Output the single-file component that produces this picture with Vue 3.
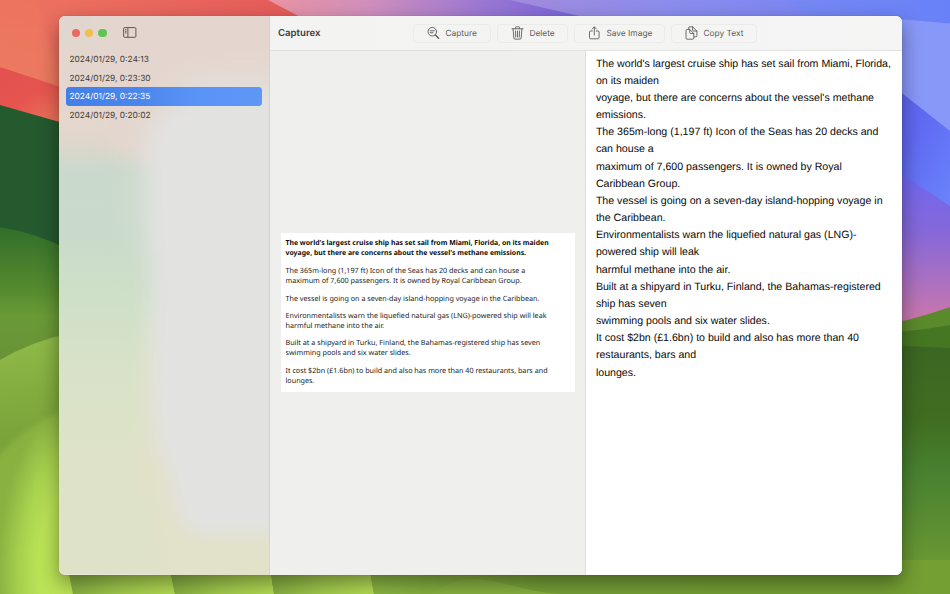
<script setup>
import { ref } from 'vue'

const captures = [
  '2024/01/29, 0:24:13',
  '2024/01/29, 0:23:30',
  '2024/01/29, 0:22:35',
  '2024/01/29, 0:20:02',
]
const selected = ref(2)

const imageParagraphs = [
  ['The 365m-long (1,197 ft) Icon of the Seas has 20 decks and can house a', 'maximum of 7,600 passengers. It is owned by Royal Caribbean Group.'],
  ['The vessel is going on a seven-day island-hopping voyage in the Caribbean.'],
  ['Environmentalists warn the liquefied natural gas (LNG)-powered ship will leak', 'harmful methane into the air.'],
  ['Built at a shipyard in Turku, Finland, the Bahamas-registered ship has seven', 'swimming pools and six water slides.'],
  ['It cost $2bn (£1.6bn) to build and also has more than 40 restaurants, bars and', 'lounges.'],
]

const recognised = [
  "The world's largest cruise ship has set sail from Miami, Florida,",
  'on its maiden',
  "voyage, but there are concerns about the vessel's methane",
  'emissions.',
  'The 365m-long (1,197 ft) Icon of the Seas has 20 decks and',
  'can house a',
  'maximum of 7,600 passengers. It is owned by Royal',
  'Caribbean Group.',
  'The vessel is going on a seven-day island-hopping voyage in',
  'the Caribbean.',
  'Environmentalists warn the liquefied natural gas (LNG)-',
  'powered ship will leak',
  'harmful methane into the air.',
  'Built at a shipyard in Turku, Finland, the Bahamas-registered',
  'ship has seven',
  'swimming pools and six water slides.',
  'It cost $2bn (£1.6bn) to build and also has more than 40',
  'restaurants, bars and',
  'lounges.',
]
</script>

<template>
  <div class="desktop">
    <svg class="wallpaper" viewBox="0 0 950 594" aria-hidden="true">
      <defs>
        <linearGradient id="coral" x1="0" y1="0" x2="1" y2="0">
          <stop offset="0" stop-color="#ee735f" /><stop offset=".2" stop-color="#ec6f5f" /><stop offset="1" stop-color="#e4595a" />
        </linearGradient>
        <linearGradient id="orange" x1="0" y1="0" x2="0" y2="1">
          <stop offset="0" stop-color="#ee735f" /><stop offset="1" stop-color="#ea8560" />
        </linearGradient>
        <linearGradient id="red" x1="0" y1="0" x2=".6" y2="1">
          <stop offset="0" stop-color="#e25050" /><stop offset=".5" stop-color="#e6554f" /><stop offset="1" stop-color="#ee7c5c" />
        </linearGradient>
        <linearGradient id="pink" gradientUnits="userSpaceOnUse" x1="270" y1="0" x2="600" y2="0">
          <stop offset="0" stop-color="#ea93a2" /><stop offset=".3" stop-color="#d08fbd" /><stop offset=".65" stop-color="#9a77d3" /><stop offset="1" stop-color="#6f61e0" />
        </linearGradient>
        <linearGradient id="peri" gradientUnits="userSpaceOnUse" x1="515" y1="0" x2="810" y2="0">
          <stop offset="0" stop-color="#a18bdc" /><stop offset=".5" stop-color="#8c8dee" /><stop offset="1" stop-color="#7b86f2" />
        </linearGradient>
        <linearGradient id="blue" gradientUnits="userSpaceOnUse" x1="790" y1="0" x2="950" y2="0">
          <stop offset="0" stop-color="#7788f3" /><stop offset="1" stop-color="#6881f8" />
        </linearGradient>
        <linearGradient id="deep" x1="0" y1="0" x2="1" y2="1">
          <stop offset="0" stop-color="#5a62ef" /><stop offset=".5" stop-color="#6069f2" /><stop offset="1" stop-color="#6a84fb" />
        </linearGradient>
        <linearGradient id="dusk" gradientUnits="userSpaceOnUse" x1="0" y1="175" x2="0" y2="322">
          <stop offset="0" stop-color="#6f67ef" /><stop offset=".4" stop-color="#8768d8" /><stop offset=".8" stop-color="#b472ba" /><stop offset="1" stop-color="#cb77a9" />
        </linearGradient>
        <linearGradient id="forest" gradientUnits="userSpaceOnUse" x1="0" y1="345" x2="0" y2="594">
          <stop offset="0" stop-color="#3b6623" /><stop offset=".3" stop-color="#406d21" /><stop offset=".5" stop-color="#478030" /><stop offset="1" stop-color="#759f35" />
        </linearGradient>
        <linearGradient id="hill" gradientUnits="userSpaceOnUse" x1="0" y1="225" x2="0" y2="355">
          <stop offset="0" stop-color="#316d2b" /><stop offset=".5" stop-color="#558b2e" /><stop offset=".7" stop-color="#6a9a36" /><stop offset="1" stop-color="#689437" />
        </linearGradient>
        <linearGradient id="meadow" gradientUnits="userSpaceOnUse" x1="0" y1="340" x2="20" y2="480">
          <stop offset="0" stop-color="#8fba48" /><stop offset=".4" stop-color="#83ac3f" /><stop offset="1" stop-color="#729a37" />
        </linearGradient>
        <radialGradient id="glow" gradientUnits="userSpaceOnUse" cx="80" cy="570" r="82" gradientTransform="matrix(1 0 0 2.050 0 -598)">
          <stop offset="0" stop-color="#bde557" /><stop offset=".5" stop-color="#bbe357" /><stop offset=".72" stop-color="#a9d34f" /><stop offset="1" stop-color="#88b141" />
        </radialGradient>
        <linearGradient id="floor" x1="0" y1="0" x2="1" y2="0">
          <stop offset="0" stop-color="#85ad40" /><stop offset=".5" stop-color="#a2cb4c" /><stop offset="1" stop-color="#b6de54" />
        </linearGradient>
        <linearGradient id="slope" x1="0" y1="0" x2="1" y2="0">
          <stop offset="0" stop-color="#8cb743" /><stop offset=".3" stop-color="#76a036" /><stop offset="1" stop-color="#749f33" />
        </linearGradient>
        <filter id="haze"><feGaussianBlur stdDeviation="2.500" /></filter>
      </defs>
      <rect width="950" height="594" fill="#749f33" />
      <path d="M0 0H270L320 26V130H0Z" fill="url(#coral)" />
      <path d="M-20 -20H30L59 75V95L-20 60Z" fill="url(#orange)" opacity=".5" filter="url(#haze)" />
      <path d="M0 67L70 90V140H0Z" fill="url(#red)" />
      <path d="M268 0H620V30H325Z" fill="url(#pink)" />
      <path d="M510 0H950V30H640Z" fill="url(#peri)" />
      <path d="M788 0H950V30H830Z" fill="url(#blue)" />
      <path d="M870 18Q910 19 950 23.500V140H870Z" fill="#8898f8" />
      <path d="M870 68L950 131V210H870Z" fill="url(#deep)" />
      <path d="M870 153L950 206V330H870Z" fill="url(#dusk)" />
      <path d="M870 328Q914 320 950 307V594H870Z" fill="#5b8a2c" />
      <path d="M870 334Q920 331 950 325V594H870Z" fill="#457722" />
      <path d="M870 343Q910 347 950 348V594H870Z" fill="url(#forest)" />
      <path d="M0 105L70 125V260H0Z" fill="#25592e" />
      <path d="M0 227Q36 233 70 250V400H0Z" fill="url(#hill)" />
      <path d="M0 360Q30 342 70 333V594H0Z" fill="url(#meadow)" />
      <path d="M-30 490Q14 426 76 405V630H-30Z" fill="url(#glow)" filter="url(#haze)" />
      <path d="M66 560L73 594H175L168 560Z" fill="url(#floor)" />
      <path d="M168 560L175 594H274L269 560Z" fill="url(#floor)" />
      <path d="M269 560L274 594H374L368 560Z" fill="url(#floor)" />
      <path d="M368 560L374 594H950V560Z" fill="url(#slope)" />
      <path d="M430 594C445 584 460 578 478 579C505 581 520 591 560 594Z" fill="#87b040" />
    </svg>

    <main class="window">
      <aside class="sidebar">
        <svg class="vibrancy" viewBox="0 0 210 558" preserveAspectRatio="none" aria-hidden="true">
          <defs>
            <linearGradient id="tint" x1="0" y1="0" x2="0" y2="1">
              <stop offset="0" stop-color="#e1d6cf" /><stop offset=".19" stop-color="#e4d7ce" />
              <stop offset=".225" stop-color="#dfd6cc" /><stop offset=".28" stop-color="#cad9cb" /><stop offset=".39" stop-color="#c9dacb" />
              <stop offset=".5" stop-color="#cfe0c8" /><stop offset=".65" stop-color="#d9e2c9" />
              <stop offset=".8" stop-color="#dee2c8" /><stop offset="1" stop-color="#dfe2c9" />
            </linearGradient>
            <filter id="soft" x="-50%" y="-50%" width="200%" height="200%"><feGaussianBlur stdDeviation="9" /></filter>
            <filter id="softer" x="-50%" y="-50%" width="200%" height="200%"><feGaussianBlur stdDeviation="18" /></filter>
          </defs>
          <rect width="210" height="558" fill="url(#tint)" />
          <g filter="url(#soft)">
            <path d="M40 -20H230V110L105 150L50 128Z" fill="#e4d6ce" />
            <path d="M90 300L84 440L105 590H125L230 570V500H130L100 300Z" fill="#e2e1c9" />
          </g>
          <path d="M130 66H240V240H90V120Z" fill="#e1e2df" filter="url(#softer)" />
          <path d="M108 100L150 88H240V518H140Q120 515 115 480Q112 455 98 430Q92 400 93 330V135Q95 112 108 100Z" fill="#e2e2e1" filter="url(#soft)" />
        </svg>
        <header class="chrome">
          <span class="light close"></span>
          <span class="light minimise"></span>
          <span class="light zoom"></span>
          <svg class="toggle" viewBox="0 0 14 11">
            <rect x=".6" y=".6" width="12.300" height="9.700" rx="1" /><path d="M4.900.6V10.300M2 2.700H3.500M2 4.300H3.500M2 5.900H3.500" />
          </svg>
        </header>
        <ul class="captures">
          <li v-for="(name, i) in captures" :key="name" :class="{ selected: i === selected }" @click="selected = i">{{ name }}</li>
        </ul>
      </aside>

      <section class="content">
        <header class="toolbar">
          <h1>Capturex</h1>
          <nav class="actions">
            <button class="capture">
              <svg viewBox="0 0 13 14"><circle cx="5.300" cy="5.700" r="4.300" /><path d="M8.400 9L11.600 12.200" stroke-width="1.400" /><path d="M3.200 4.800H7.400M3.200 6.700H6" /></svg>
              Capture
            </button>
            <button class="delete">
              <svg viewBox="0 0 13 14"><path d="M1 2.800H12M4.500 2.600V1.500Q4.500.8 5.200.8H7.800Q8.500.8 8.500 1.500V2.600M2.100 3L2.800 12Q2.900 13.100 4 13.100H9Q10.100 13.100 10.200 12L10.900 3M4.500 5L4.700 11M6.500 5V11M8.500 5L8.300 11" /></svg>
              Delete
            </button>
            <button class="save">
              <svg viewBox="0 0 13 14"><path d="M4.300 5H2.600Q1.500 5 1.500 6.100V11.700Q1.500 12.800 2.600 12.800H10Q11.100 12.800 11.100 11.700V6.100Q11.100 5 10 5H8.300M6.300 9V1M4.200 3L6.300.9L8.400 3" /></svg>
              Save Image
            </button>
            <button class="copy">
              <svg viewBox="0 0 13 14"><path d="M3.700 3.200V1.900Q3.700.8 4.800.8H7.600L11.900 5V9.700Q11.900 10.800 10.800 10.800H9.100M7.600.9V4Q7.600 5 8.600 5H11.800" /><path fill="#f4f4f3" d="M1 4.400Q1 3.400 2 3.400H4.600L8.800 7.500V12.200Q8.800 13.200 7.800 13.200H2Q1 13.200 1 12.200Z" /><path d="M4.700 3.500V6.500Q4.700 7.500 5.700 7.500H8.700" /></svg>
              Copy Text
            </button>
          </nav>
        </header>
        <div class="panes">
          <div class="preview">
            <article class="shot">
              <p class="lead">The world's largest cruise ship has set sail from Miami, Florida, on its maiden<br />voyage, but there are concerns about the vessel's methane emissions.</p>
              <p v-for="(lines, i) in imageParagraphs" :key="i"><template v-for="(line, j) in lines" :key="j"><br v-if="j" />{{ line }}</template></p>
            </article>
          </div>
          <div class="text">
            <div v-for="(line, i) in recognised" :key="i">{{ line }}</div>
          </div>
        </div>
      </section>
    </main>
  </div>
</template>

<style>
body { margin: 0; overflow: hidden; }
</style>

<style scoped>
.desktop {
  position: relative;
  width: 950px;
  height: 594px;
  box-sizing: border-box;
  padding: 16px 48.5px 19.5px 59px;
  overflow: hidden;
  font-family: Inter, "Liberation Sans", sans-serif;
  text-rendering: geometricPrecision;
}
.wallpaper {
  position: absolute;
  inset: 0;
  width: 950px;
  height: 594px;
}
.window {
  position: relative;
  display: flex;
  height: 558.5px;
  border-radius: 6px;
  overflow: hidden;
  background: #efefee;
  box-shadow: 0 0 1px rgba(0, 0, 0, .3), 0 8px 20px rgba(0, 0, 0, .4);
}
.sidebar {
  position: relative;
  flex: 0 0 210.5px;
  box-sizing: border-box;
  border-right: 1px solid #d2d2d0;
  overflow: hidden;
}
.vibrancy {
  position: absolute;
  inset: 0;
  width: 100%;
  height: 100%;
}
.chrome {
  position: relative;
  display: flex;
  align-items: center;
  gap: 4.8px;
  height: 34px;
  padding-left: 12.7px;
}
.light {
  width: 8.5px;
  height: 8.5px;
  border-radius: 50%;
}
.close { background: #ec695f; }
.minimise { background: #f2be4f; }
.zoom { background: #5fc454; }
.toggle {
  width: 14px;
  height: 11px;
  margin: -1px 0 0 11.5px;
  fill: none;
  stroke: #5f5855;
  stroke-width: 1;
}
.captures {
  position: relative;
  margin: 0;
  padding: .3px 6.5px 0;
  list-style: none;
}
.captures li {
  height: 18.5px;
  padding-left: 3.9px;
  border-radius: 3.5px;
  color: #403b39;
  font-size: 8.4px;
  line-height: 20.6px;
}
.captures .selected {
  background: linear-gradient(90deg, #437fe8, #4b86ec 38%, #5a93f6 65%, #5f97f8);
  color: #fff;
}
.content {
  flex: 1;
  min-width: 0;
  display: flex;
  flex-direction: column;
}
.toolbar {
  display: flex;
  align-items: center;
  box-sizing: border-box;
  height: 35px;
  padding-left: 8.5px;
  border-bottom: 1px solid #e0e0df;
  background: linear-gradient(90deg, #f3f3f1, #f4f4f3 50%, #f5f5f5);
}
h1 {
  width: 135.2px;
  margin: 1px 0 0;
  color: #3d3d3c;
  font-size: 9.65px;
  font-weight: 600;
}
.actions {
  display: flex;
  gap: 6px;
}
button {
  display: flex;
  align-items: center;
  box-sizing: border-box;
  height: 19px;
  padding: 1px 0 0 13px;
  border: 1px solid #ebebea;
  border-radius: 4px;
  background: transparent;
  color: #5c5c5b;
  font: 8.4px Inter, "Liberation Sans", sans-serif;
  text-rendering: geometricPrecision;
  white-space: nowrap;
}
button svg {
  width: 13px;
  height: 14px;
  margin: -1px 5px 0 .2px;
  fill: none;
  stroke: #5c5c5b;
  stroke-width: .9;
  stroke-linecap: round;
  stroke-linejoin: round;
}
.capture { width: 78px; }
.delete { width: 71px; }
.save { width: 91px; }
.copy { width: 86px; }
.panes {
  flex: 1;
  display: flex;
}
.preview {
  flex: 0 0 316.5px;
  display: flex;
  align-items: center;
  box-sizing: border-box;
  padding: 0 10.500px 0 11px;
  border-right: 1px solid #dedede;
  background: #efefee;
}
.shot {
  flex: 1;
  box-sizing: border-box;
  height: 159px;
  padding: 5.900px 5px;
  background: #fff;
  color: #222;
  font: 7.2px/10px "Noto Sans", "Open Sans", sans-serif;
  white-space: nowrap;
}
.shot p { margin: 0 0 7.4px; }
.shot .lead {
  margin-bottom: 7.1px;
  color: #0c0c0c;
  font-size: 6.9px;
  font-weight: 700;
}
.text {
  flex: 1;
  padding: 4.7px 0 0 9.9px;
  background: #fff;
  color: #0a0a0a;
  font: 10.62px/17.15px "Liberation Sans", sans-serif;
  white-space: nowrap;
}
</style>
